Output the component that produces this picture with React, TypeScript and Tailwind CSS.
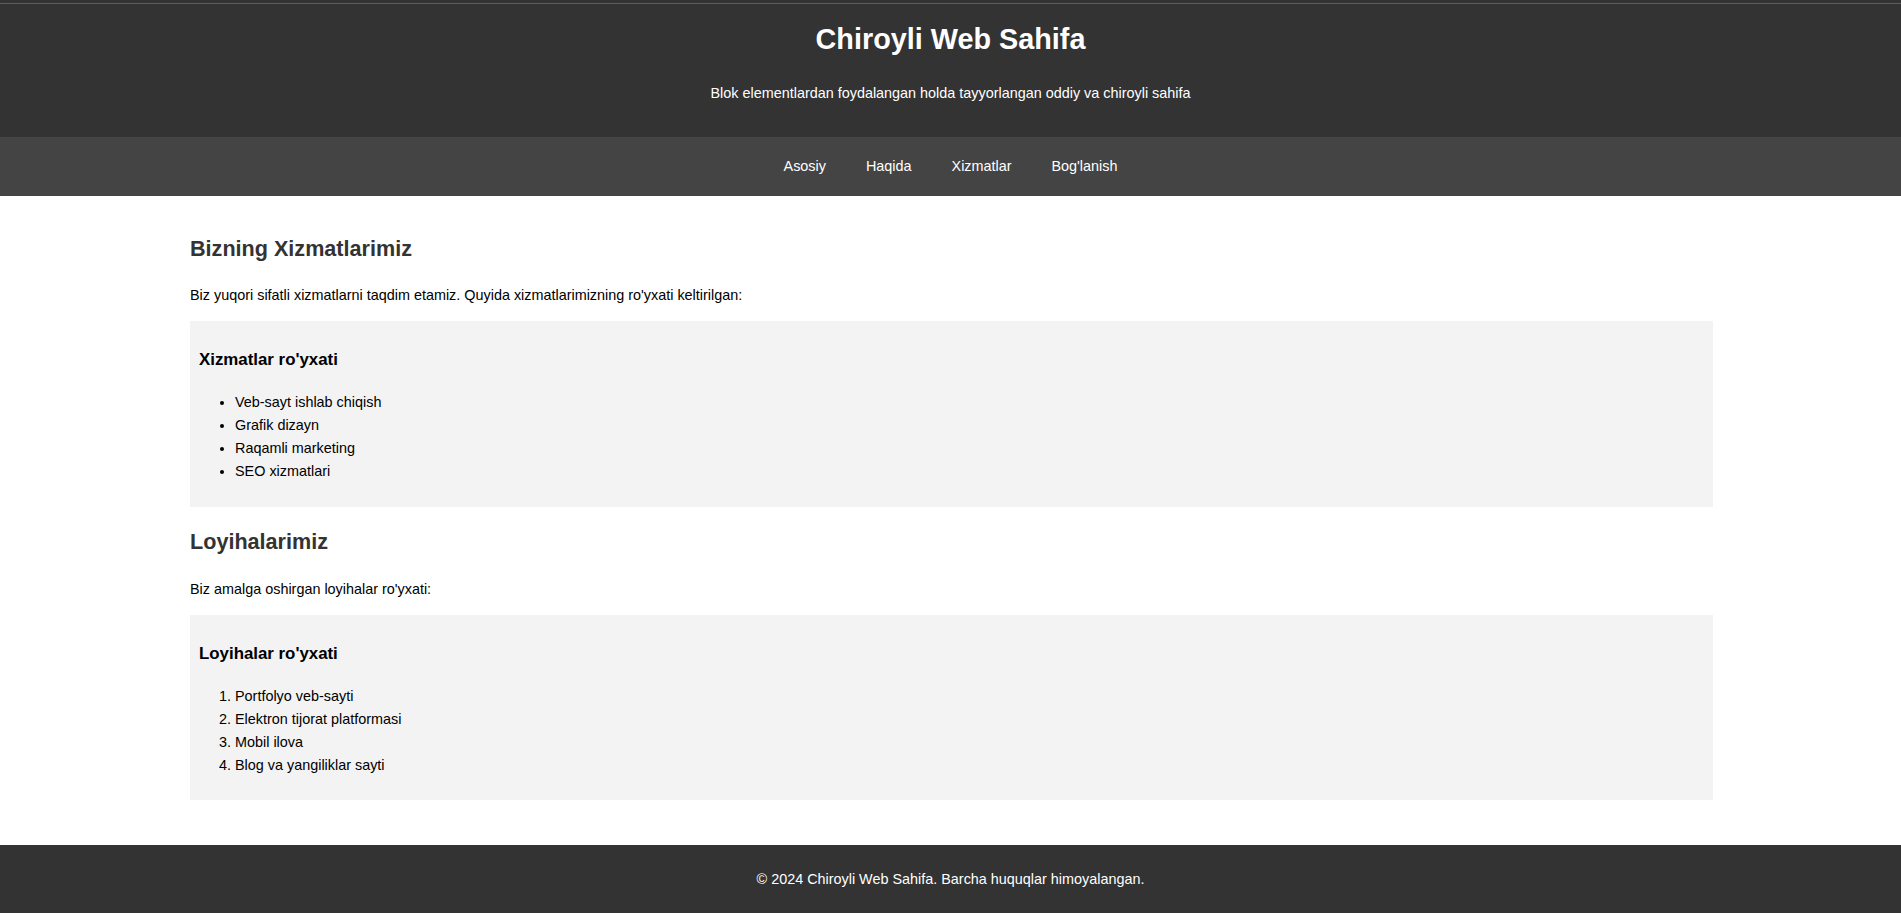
const SERVICES = ["Veb-sayt ishlab chiqish", "Grafik dizayn", "Raqamli marketing", "SEO xizmatlari"];
const PROJECTS = ["Portfolyo veb-sayti", "Elektron tijorat platformasi", "Mobil ilova", "Blog va yangiliklar sayti"];
const LINKS = ["Asosiy", "Haqida", "Xizmatlar", "Bog'lanish"];

function Box({ title, children }: { title: string; children: React.ReactNode }) {
  return (
    <div className="bg-[#f3f3f3] p-[9px]">
      <h3 className="mt-[17px] mb-[16.85px] text-[16.85px] font-bold text-black">{title}</h3>
      {children}
    </div>
  );
}

export default function App() {
  return (
    <div className="min-h-screen bg-white font-['Liberation_Sans',Arial,sans-serif] text-[14.4px] leading-[1.6] text-black">
      <header className="bg-[#333] text-white text-center">
        <div className="h-[3px]" />
        <div className="h-px bg-[#5e5e5e]" />
        <div className="pt-[12px] pb-[31.6px]">
          <h1 className="text-[28.8px] font-bold leading-[1.6]">Chiroyli Web Sahifa</h1>
          <p className="mt-[19.8px]">Blok elementlardan foydalangan holda tayyorlangan oddiy va chiroyli sahifa</p>
        </div>
      </header>

      <nav className="bg-[#444] pt-[18px] pb-[18px] flex justify-center gap-[40px] text-white">
        {LINKS.map((l) => (
          <a key={l} href="#" className="text-white">
            {l}
          </a>
        ))}
      </nav>

      <main className="w-[1523px] ml-[190px] pt-[18px] pb-[18px]">
        <h2 className="mt-[18px] mb-[18px] text-[21.6px] font-bold text-[#333]">Bizning Xizmatlarimiz</h2>
        <p className="mb-[14px]">Biz yuqori sifatli xizmatlarni taqdim etamiz. Quyida xizmatlarimizning ro'yxati keltirilgan:</p>
        <Box title="Xizmatlar ro'yxati">
          <ul className="list-disc pl-[36px] mb-[14.4px]">
            {SERVICES.map((s) => (
              <li key={s}>{s}</li>
            ))}
          </ul>
        </Box>

        <h2 className="mt-[18.5px] mb-[18px] text-[21.6px] font-bold text-[#333]">Loyihalarimiz</h2>
        <p className="mb-[14.5px]">Biz amalga oshirgan loyihalar ro'yxati:</p>
        <Box title="Loyihalar ro'yxati">
          <ol className="list-decimal pl-[36px] mb-[14.4px]">
            {PROJECTS.map((p) => (
              <li key={p}>{p}</li>
            ))}
          </ol>
        </Box>
      </main>

      <footer className="mt-[26.5px] bg-[#333] text-white text-center py-[9px]">
        <p className="my-[14.4px]">© 2024 Chiroyli Web Sahifa. Barcha huquqlar himoyalangan.</p>
      </footer>
    </div>
  );
}
